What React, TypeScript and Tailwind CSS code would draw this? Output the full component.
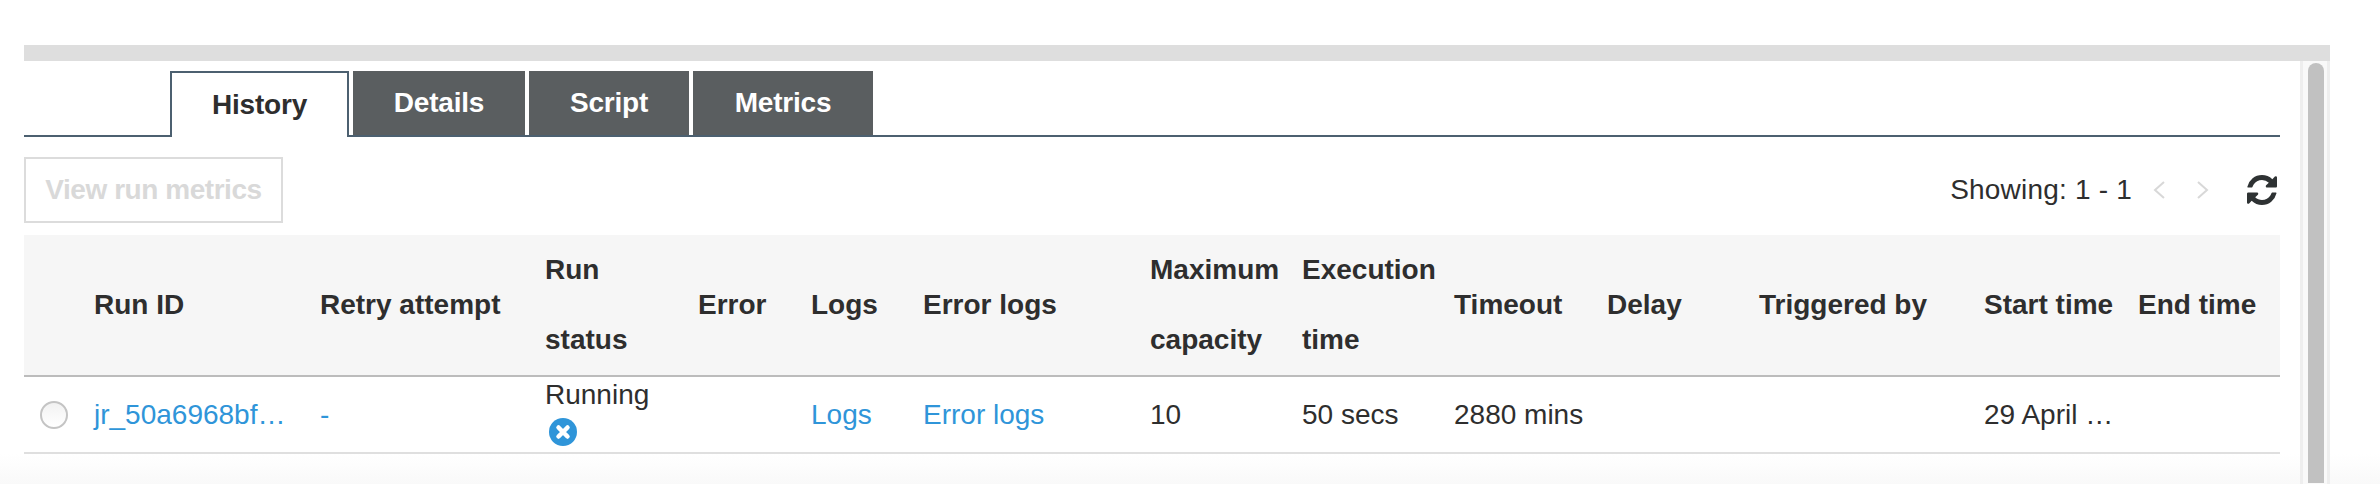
export default function App() {
  const heads: [string, string][] = [
    ["", "w-[54px]"],
    ["Run ID", "w-[226px]"],
    ["Retry attempt", "w-[225px]"],
    ["Run status", "w-[153px]"],
    ["Error", "w-[113px]"],
    ["Logs", "w-[112px]"],
    ["Error logs", "w-[227px]"],
    ["Maximum capacity", "w-[152px]"],
    ["Execution time", "w-[152px]"],
    ["Timeout", "w-[153px]"],
    ["Delay", "w-[152px]"],
    ["Triggered by", "w-[225px]"],
    ["Start time", "w-[154px]"],
    ["End time", "w-[158px]"],
  ];
  const td = "h-[77px] pl-4 border-b-2 border-[#dfdfdf] whitespace-nowrap";
  const link = "text-[#2f95d9]";
  return (
    <div className="w-[2380px] h-[484px] overflow-hidden pt-[45px] pl-[24px] font-['Liberation_Sans',Arial,sans-serif] text-[28px] text-[#2e2e2e] bg-[linear-gradient(to_bottom,#ffffff_0,#ffffff_454px,#f9f9f9_484px)]">
      <div className="w-[2306px]">
        <div className="h-[16px] bg-[#dedede]" />
        <div className="flex">
          <div className="w-[2256px] shrink-0">
            <div className="mt-[10px] h-[66px] flex pl-[146px] gap-[4px] border-b-2 border-[#4c6070] font-bold">
              <div className="w-[179px] h-[66px] bg-white border-2 border-b-0 border-[#4c6070] flex items-center justify-center text-[#2e2e2e] tracking-[-0.2px]">History</div>
              <div className="w-[172px] h-[64px] bg-[#5a5e60] text-white flex items-center justify-center tracking-[-0.2px]">Details</div>
              <div className="w-[160px] h-[64px] bg-[#5a5e60] text-white flex items-center justify-center tracking-[-0.2px]">Script</div>
              <div className="w-[180px] h-[64px] bg-[#5a5e60] text-white flex items-center justify-center tracking-[-0.2px]">Metrics</div>
            </div>
            <div className="mt-[20px] h-[66px] flex items-center justify-between">
              <button className="w-[259px] h-[66px] border-2 border-[#dcdcdc] bg-white text-[#d9d9d9] font-bold tracking-[-0.45px]">View run metrics</button>
              <div className="flex items-center pr-[3px]">
                <span className="tracking-[0.2px]">Showing: 1 - 1</span>
                <svg className="ml-[21px]" width="12" height="18" viewBox="0 0 12 18" fill="none" stroke="#d8d8d8" strokeWidth="2"><path d="M11 1 2 9l9 8" /></svg>
                <svg className="ml-[32px]" width="12" height="18" viewBox="0 0 12 18" fill="none" stroke="#d8d8d8" strokeWidth="2"><path d="m1 1 9 8-9 8" /></svg>
                <svg className="ml-[38px]" width="30" height="30" viewBox="128 128 1536 1536" fill="#2e3233"><path d="M1639 1056q0 5-1 7-64 268-268 434.5t-478 166.5q-146 0-282.5-55t-243.5-157l-129 129q-19 19-45 19t-45-19-19-45v-448q0-26 19-45t45-19h448q26 0 45 19t19 45-19 45l-137 137q71 66 161 102t187 36q134 0 250-65t186-179q11-17 53-117 8-23 30-23h192q13 0 22.5 9.5t9.5 22.5zm25-800v448q0 26-19 45t-45 19h-448q-26 0-45-19t-19-45 19-45l138-138q-148-137-349-137-134 0-250 65t-186 179q-11 17-53 117-8 23-30 23h-199q-13 0-22.5-9.5t-9.5-22.5v-7q65-268 270-434.5t480-166.5q146 0 284 55.5t245 156.5l130-129q19-19 45-19t45 19 19 45z" /></svg>
              </div>
            </div>
            <table className="mt-[12px] w-[2256px] table-fixed border-separate border-spacing-0">
              <thead>
                <tr>
                  {heads.map(([h, w], i) => (
                    <th key={i} className={`${w} h-[142px] pl-4 bg-[#f6f6f6] border-b-2 border-[#bcbcbc] text-left font-bold leading-[70px]`}>{h}</th>
                  ))}
                </tr>
              </thead>
              <tbody>
                <tr>
                  <td className={td}>
                    <div className="w-[28px] h-[28px] rounded-full border-2 border-[#c4c4c4] bg-[linear-gradient(to_bottom,#f2f2f2,#ffffff)]" />
                  </td>
                  <td className={td}><a className={link}>jr_50a6968bf…</a></td>
                  <td className={td}><a className={link}>-</a></td>
                  <td className={`${td} align-top`}>
                    <div className="leading-[32px] pt-[2px]">Running</div>
                    <svg className="mt-[7px] ml-[4px]" width="28" height="28" viewBox="0 0 28 28">
                      <circle cx="14" cy="14" r="14" fill="#2f95d9" />
                      <path d="M9.5 9.5l9 9M18.500 9.500l-9 9" stroke="#ffffff" strokeWidth="4.500" strokeLinecap="round" />
                    </svg>
                  </td>
                  <td className={td} />
                  <td className={td}><a className={link}>Logs</a></td>
                  <td className={td}><a className={link}>Error logs</a></td>
                  <td className={td}>10</td>
                  <td className={td}>50 secs</td>
                  <td className={td}>2880 mins</td>
                  <td className={td} />
                  <td className={td} />
                  <td className={td}>29 April …</td>
                  <td className={td} />
                </tr>
              </tbody>
            </table>
          </div>
          <div className="ml-[20px] w-[30px] h-[424px] shrink-0 bg-[#f9f9f9] border-x-[3px] border-[#eeeeee] pl-[5px] pt-[2px]">
            <div className="w-[16px] h-[420px] bg-[#c1c1c1] rounded-t-[8px]" />
          </div>
        </div>
      </div>
    </div>
  );
}
